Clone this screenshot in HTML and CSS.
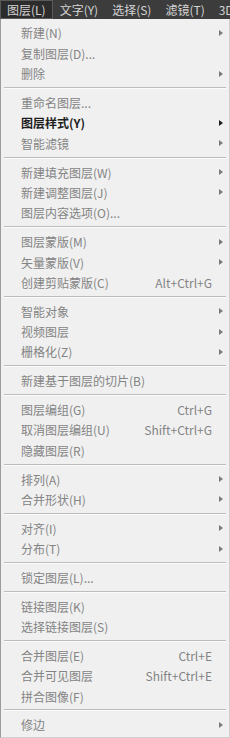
FILE: index.html
```html
<!DOCTYPE html>
<html lang="zh-CN">
<head>
  <meta charset="UTF-8">
  <title>图层菜单</title>
  <link rel="stylesheet" href="styles.css">
</head>
<body>
  <div class="menubar">
    <span class="top active">图层(L)</span>
    <span class="top">文字(Y)</span>
    <span class="top">选择(S)</span>
    <span class="top">滤镜(T)</span>
    <span class="top">3D</span>
  </div>

  <ul class="menu">
    <li class="item sub"><span class="label">新建(N)</span><span class="arrow"></span></li>
    <li class="item"><span class="label">复制图层(D)...</span><span class="arrow"></span></li>
    <li class="item sub"><span class="label">删除</span><span class="arrow"></span></li>
    <li class="sep"></li>
    <li class="item"><span class="label">重命名图层...</span><span class="arrow"></span></li>
    <li class="item sub on"><span class="label">图层样式(Y)</span><span class="arrow"></span></li>
    <li class="item sub"><span class="label">智能滤镜</span><span class="arrow"></span></li>
    <li class="sep"></li>
    <li class="item sub"><span class="label">新建填充图层(W)</span><span class="arrow"></span></li>
    <li class="item sub"><span class="label">新建调整图层(J)</span><span class="arrow"></span></li>
    <li class="item"><span class="label">图层内容选项(O)...</span><span class="arrow"></span></li>
    <li class="sep"></li>
    <li class="item sub"><span class="label">图层蒙版(M)</span><span class="arrow"></span></li>
    <li class="item sub"><span class="label">矢量蒙版(V)</span><span class="arrow"></span></li>
    <li class="item"><span class="label">创建剪贴蒙版(C)</span><span class="key">Alt+Ctrl+G</span><span class="arrow"></span></li>
    <li class="sep"></li>
    <li class="item sub"><span class="label">智能对象</span><span class="arrow"></span></li>
    <li class="item sub"><span class="label">视频图层</span><span class="arrow"></span></li>
    <li class="item sub"><span class="label">栅格化(Z)</span><span class="arrow"></span></li>
    <li class="sep"></li>
    <li class="item"><span class="label">新建基于图层的切片(B)</span><span class="arrow"></span></li>
    <li class="sep"></li>
    <li class="item"><span class="label">图层编组(G)</span><span class="key">Ctrl+G</span><span class="arrow"></span></li>
    <li class="item"><span class="label">取消图层编组(U)</span><span class="key">Shift+Ctrl+G</span><span class="arrow"></span></li>
    <li class="item"><span class="label">隐藏图层(R)</span><span class="arrow"></span></li>
    <li class="sep"></li>
    <li class="item sub"><span class="label">排列(A)</span><span class="arrow"></span></li>
    <li class="item sub"><span class="label">合并形状(H)</span><span class="arrow"></span></li>
    <li class="sep"></li>
    <li class="item sub"><span class="label">对齐(I)</span><span class="arrow"></span></li>
    <li class="item sub"><span class="label">分布(T)</span><span class="arrow"></span></li>
    <li class="sep"></li>
    <li class="item"><span class="label">锁定图层(L)...</span><span class="arrow"></span></li>
    <li class="sep"></li>
    <li class="item"><span class="label">链接图层(K)</span><span class="arrow"></span></li>
    <li class="item"><span class="label">选择链接图层(S)</span><span class="arrow"></span></li>
    <li class="sep"></li>
    <li class="item"><span class="label">合并图层(E)</span><span class="key">Ctrl+E</span><span class="arrow"></span></li>
    <li class="item"><span class="label">合并可见图层</span><span class="key">Shift+Ctrl+E</span><span class="arrow"></span></li>
    <li class="item"><span class="label">拼合图像(F)</span><span class="arrow"></span></li>
    <li class="sep"></li>
    <li class="item sub"><span class="label">修边</span><span class="arrow"></span></li>
  </ul>
</body>
</html>
```

FILE: styles.css
```css
/* Page */
body {
  margin: 0;
  background: #f0f0f0;
  font-family: "Noto Sans CJK SC", "Noto Sans", sans-serif;
  font-size: 12px;
  overflow: hidden;
}

/* Top menu bar */
.menubar {
  display: flex;
  height: 19px;
  background: #3c3c3c;
  white-space: nowrap;
  overflow: hidden;
}
.menubar .top {
  flex: none;
  display: flex;
  align-items: center;
  padding: 0 7px;
  color: #d4d4d4;
  font-size: 12px;
  line-height: 19px;
}
.menubar .active {
  background: #2c2c2c;
  box-shadow: inset 0 0 0 1px #5a5a5a;
}

/* Dropdown */
.menu {
  list-style: none;
  margin: 0;
  padding: 3.8px 0 2px;
  background: #f0f0f0;
  border-left: 1px solid #9c9c9c;
  border-right: 1px solid #d0d0d0;
  border-bottom: 1px solid #d0d0d0;
  box-sizing: border-box;
  width: 230px;
}
.menu .item {
  display: flex;
  align-items: center;
  height: 20.4px;
  padding-left: 20px;
  color: #848484;
  white-space: nowrap;
}
.menu .item .label {
  flex: 1;
}
.menu .item .key {
  color: #848484;
}
.menu .item .arrow {
  width: 17px;
  display: flex;
  justify-content: center;
}
.menu .sub .arrow::after {
  content: "";
  border-style: solid;
  border-width: 3.5px 0 3.5px 4px;
  border-color: transparent transparent transparent #7a7a7a;
}
.menu .on {
  color: #1e1e1e;
  font-weight: bold;
}
.menu .on .arrow::after {
  border-left-color: #1e1e1e;
}

/* Separators */
.menu .sep {
  height: 0;
  margin: 3.2px 3px 3.2px 3px;
  border-top: 1px solid #bdbdbd;
  border-bottom: 1px solid #fbfbfb;
}
```
